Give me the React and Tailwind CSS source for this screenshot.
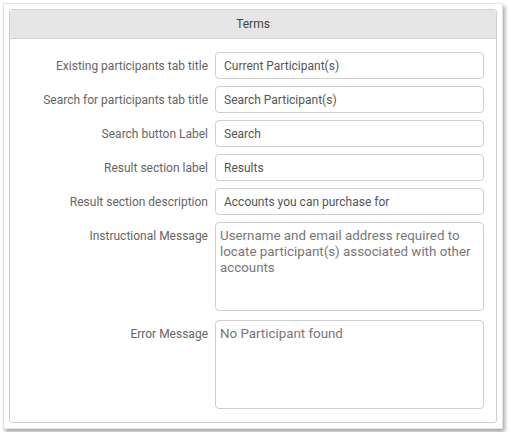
import React from "react";

const fields = [
  { label: "Existing participants tab title", value: "Current Participant(s)" },
  { label: "Search for participants tab title", value: "Search Participant(s)" },
  { label: "Search button Label", value: "Search" },
  { label: "Result section label", value: "Results" },
  { label: "Result section description", value: "Accounts you can purchase for" },
];

const areas = [
  {
    label: "Instructional Message",
    value:
      "Username and email address required to locate participant(s) associated with other accounts",
  },
  { label: "Error Message", value: "No Participant found" },
];

export default function App() {
  return (
    <div className="p-[3px] bg-white" style={{ fontFamily: "Roboto, 'Noto Sans', sans-serif" }}>
      <div className="w-[500px] h-[426px] bg-white border border-[#e4e4e4] shadow-[2px_3px_4px_rgba(0,0,0,0.35)] p-[5px]">
        <div className="w-[488px] h-[414px] border border-[#cfcfcf] rounded-[3px] overflow-hidden flex flex-col">
          <div className="h-[29px] shrink-0 bg-[#e6e6e6] border-b border-[#cfcfcf] flex items-center justify-center text-[12px] text-[#444]">
            Terms
          </div>
          <div className="flex flex-col gap-[7px] pt-[13px] pr-[12px]">
            {fields.map((f) => (
              <div key={f.label} className="flex items-center gap-[7px]">
                <div className="w-[198px] text-right text-[12px] text-[#666] whitespace-nowrap">
                  {f.label}
                </div>
                <div className="w-[269px] h-[27px] border border-[#cfcfcf] rounded-[4px] flex items-center px-[8px] text-[12px] text-[#555]">
                  {f.value}
                </div>
              </div>
            ))}
            {areas.map((a, i) => (
              <div key={a.label} className={"flex items-start gap-[7px]" + (i === 1 ? " mt-[2px]" : "")}>
                <div className="w-[198px] text-right text-[12px] text-[#666] whitespace-nowrap pt-[5px]">
                  {a.label}
                </div>
                <div className="w-[269px] h-[89px] border border-[#cfcfcf] rounded-[4px] px-[4px] pt-[5px] text-[13.33px] leading-[16px] text-[#777]">
                  {a.value}
                </div>
              </div>
            ))}
          </div>
        </div>
      </div>
    </div>
  );
}
